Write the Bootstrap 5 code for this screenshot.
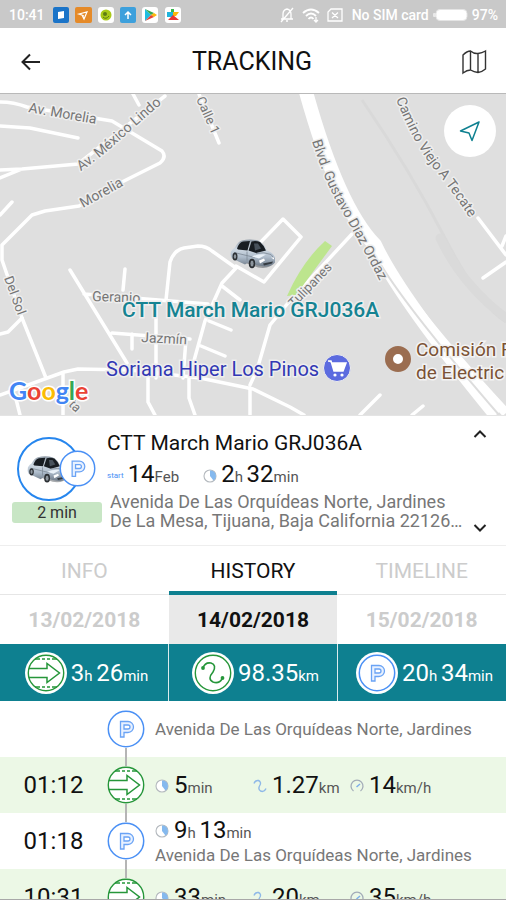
<!DOCTYPE html>
<html lang="en">
<head>
<meta charset="utf-8">
<meta name="viewport" content="width=device-width, initial-scale=1">
<title>Tracking</title>
<link href="https://cdn.jsdelivr.net/npm/bootstrap@5.3.0/dist/css/bootstrap.min.css" rel="stylesheet">
<style>
  :root { --teal: #0e8090; --blue: #4a90f5; --green: #26963a; --pale: #ecf8e6; }
  body { font-family: Roboto, "Liberation Sans", sans-serif; color: #111; background: #fff; }
  button { font-family: inherit; }
  svg { display: block; flex: none; }
  .screen { border-bottom: 1px solid #a8a8a8; }
  .status { background: #c9c9c9; color: #fff; height: 28px; font-size: 14px; font-weight: 500; padding: 2px 8px 0 9px; }
  .app-head { height: 66px; padding: 2px 17px 0; border-bottom: 1px solid #b9b9b9; }
  .app-head h1 { font-size: 25px; line-height: 32px; font-weight: 400; }
  .plain { background: none; border: 0; padding: 0; color: inherit; }
  .map-svg { width: 100%; height: auto; background: #dfdfdf; }
  .locate { top: 11px; right: 10px; width: 52px; height: 52px; background: #fff; border: 0; padding: 0; }
  .vehicle { padding: 12px 16px 11px 12px; border-top: 1px solid #e4e4e4; border-bottom: 1px solid #eee; gap: 5px; height: 131px; }
  .avatar { width: 90px; padding-top: 8px; }
  .ago { background: #c8e6c5; font-size: 16px; line-height: 21px; border-radius: 3px; color: #333; }
  .vehicle h2 { font-size: 21px; line-height: 30px; font-weight: 400; }
  .num { font-size: 24px; line-height: 28px; white-space: nowrap; }
  .num small { font-size: 15px; color: #555; }
  .addr { color: #777; font-size: 17px; line-height: 20px; }
  .vehicle .addr { font-size: 18px; line-height: 19px; padding: 1px 0 0 3px; }
  .since { padding-top: 2px; }
  .start { color: var(--blue); font-size: 8px; }
  .tabs button { height: 49px; font-size: 21px; color: #ccc; border-bottom: 1px solid #e6e6e6; padding-top: 3px; }
  .tabs button.active { color: #111; border-bottom: 4px solid var(--teal); padding-top: 6px; }
  .days button { height: 49px; font-size: 21px; font-weight: 700; color: #ccc; padding-top: 2px; }
  .days button.active { color: #111; background: #e9e9e9; }
  .totals { background: var(--teal); color: #fff; }
  .totals > div { height: 57px; gap: 4px; padding-left: 5px; border-right: 1px solid #dcebed; }
  .totals > div:last-child { border: 0; }
  .totals .num { padding-top: 3px; }
  .totals .num small { color: #fff; }
  .log li { height: 56px; }
  .log li:nth-child(even) { background: var(--pale); }
  .log time { width: 107px; font-size: 24px; line-height: 28px; text-align: center; }
  .rail { width: 38px; margin-right: 10px; }
  .rail i { flex: 1; width: 2px; background: #b5b5b5; }
  .rail i.none { background: none; }
  .metrics { display: grid; grid-template-columns: 98px 97px auto; padding-top: 2px; }
  .metric { gap: 5px; }
  .stop .num { line-height: 24px; }
</style>
<script src="https://cdn.jsdelivr.net/npm/bootstrap@5.3.0/dist/js/bootstrap.bundle.min.js"></script>
</head>
<body>
<svg width="0" height="0" class="position-absolute" aria-hidden="true">
  <defs>
    <linearGradient id="paint" x1="0" y1="0" x2="0" y2="1"><stop offset="0" stop-color="#8f9aa6"/><stop offset=".35" stop-color="#cfd9e3"/><stop offset=".65" stop-color="#aebccb"/><stop offset="1" stop-color="#6e7a87"/></linearGradient>
  </defs>
  <symbol id="car" viewBox="0 0 46 32">
    <path d="M3 20 L28 29 Q40 31 44 24 L42 18 L10 14Z" fill="#50565c" opacity=".5"/>
    <path d="M1 13 Q3 10 5 9 Q8 3 12 2 Q20 0 28 2 Q34 5 37 12 Q43 14 45 19 L45 24 Q42 28 35 28 L28 27 L18 24 L15 26 L2 20 Q0 17 1 13Z" fill="url(#paint)"/>
    <path d="M7 10 Q9 4 13 3 L20 2.500 L17.500 12 L8 11Z M18.500 12 L21.500 3 Q26 2 30 3.500 Q34 7 36 12 L26 14.500Z" fill="#181d22"/>
    <path d="M24 5 L28 5 L31 10 L25 12Z" fill="#48525c"/>
    <path d="M17 13 L17 22 M4 14 L25 19 M26 15 Q34 13 41 16 L44 20" stroke="#7c8894" stroke-width=".8" fill="none"/>
    <path d="M22 18 Q29 15 36 16 L29 20Z" fill="#e9f1f8"/>
    <path d="M29 22 L34 20 L35 22 L30 25Z M41 19 L44 19 L44 21Z" fill="#fff"/>
    <path d="M33 25 L43 23 L42 25 L34 27Z" fill="#353b41"/>
    <ellipse cx="5" cy="18" rx="2.500" ry="4" fill="#2b2f33"/><ellipse cx="5" cy="18" rx="1.200" ry="2.300" fill="#8d969e"/>
    <ellipse cx="22" cy="25" rx="3.200" ry="4.800" fill="#2b2f33"/><ellipse cx="22" cy="25" rx="1.600" ry="2.900" fill="#8d969e"/>
  </symbol>
  <symbol id="park" viewBox="0 0 38 38">
    <circle cx="19" cy="19" r="17.700" fill="#fff" stroke="#4a90f5" stroke-width="1.500"/>
    <path d="M13.500 11.500H21a5.500 5.500 0 0 1 0 11H17V27H13.500Z M17 15H21a2 2 0 0 1 0 4H17Z" fill="#e8f1ff" fill-rule="evenodd" stroke="#6aa3f5" stroke-width="1.300"/>
  </symbol>
  <symbol id="drive" viewBox="0 0 38 38">
    <circle cx="19" cy="19" r="17.700" fill="#fff" stroke="#26963a" stroke-width="1.400"/>
    <path d="M2 14.500H20V9.500L32.500 19L20 28.500V23.500H2" fill="none" stroke="#26963a" stroke-width="1.500"/>
    <path d="M8 5H13M15 5H18M20 5H23M25 5H30M8 33H13M15 33H18M20 33H23M25 33H30" stroke="#26963a" stroke-width="1.600"/>
  </symbol>
  <symbol id="route" viewBox="0 0 38 38">
    <circle cx="19" cy="19" r="17.700" fill="#fff" stroke="#26963a" stroke-width="1.400"/>
    <path d="M9 14Q11 8 17 9Q23 11 19 18Q13 25 19 28Q25 30 28 25" fill="none" stroke="#26963a" stroke-width="1.600"/>
    <circle cx="9" cy="14" r="1.900" fill="#26963a"/><circle cx="28.500" cy="24" r="1.900" fill="#26963a"/>
  </symbol>
  <symbol id="clock" viewBox="0 0 14 14">
    <circle cx="7" cy="7" r="6" fill="#fff" stroke="#b4b9be" stroke-width="1.100"/><path d="M7 1.500A5.500 5.500 0 0 1 10.500 11.500L7 7Z" fill="#85b9ee"/>
  </symbol>
  <symbol id="path" viewBox="0 0 14 14">
    <path d="M1 4.500Q2 1 5.500 1.500Q8.500 3 7 6Q4.500 10 7.500 12Q11 13.500 13 9.500" fill="none" stroke="#8fb9e8" stroke-width="1.400"/>
  </symbol>
  <symbol id="gauge" viewBox="0 0 14 14">
    <path d="M3.500 12A6 6 0 1 1 10.500 12" fill="none" stroke="#a3acb8" stroke-width="1.300"/><path d="M6.500 8L10 5" stroke="#7daeea" stroke-width="1.500"/>
  </symbol>
</svg>

<div class="screen vh-100 d-flex flex-column overflow-hidden">
  <div class="status d-flex align-items-center justify-content-between flex-shrink-0">
    <div class="d-flex align-items-center">
      <span class="me-2">10:41</span>
      <svg width="130" height="16" viewBox="0 0 130 16" aria-hidden="true">
        <rect width="16" height="16" rx="2" fill="#1b74c8"/><path d="M5 5L11 4V11L5 12Z" fill="#fff"/>
        <rect x="22" width="17" height="16" rx="2" fill="#e58a28"/><path d="M26 7L34 5L31 12L29 8Z M26 7L31 9" fill="none" stroke="#fff" stroke-width="1.200"/>
        <rect x="45" width="16" height="16" rx="3" fill="#fff"/><circle cx="53" cy="8" r="5.500" fill="#a9c916"/><circle cx="52" cy="7" r="2" fill="#5f7c12"/><path d="M50 10Q53 13 56 9" stroke="#5f7c12" fill="none"/>
        <rect x="67" width="16" height="16" rx="2" fill="#3da0dc"/><path d="M75 12V5M72 8L75 5L78 8" stroke="#fff" stroke-width="1.500" fill="none"/>
        <rect x="89" width="16" height="16" rx="3" fill="#fff"/><path d="M92 2L98 8L92 14Z" fill="#20bde0"/><path d="M92 2L101 6L98 8Z" fill="#35a853"/><path d="M98 8L101 6L104 8L101 10Z" fill="#fbb60a"/><path d="M92 14L98 8L101 10Z" fill="#e94335"/>
        <rect x="112" width="16" height="16" rx="3" fill="#fff"/><path d="M118 2H121V6H118Z" fill="#35b84b"/><path d="M114 5H120V10H114Z" fill="#20b4dd"/><path d="M120 5H126L123 9H120Z" fill="#fbb60a"/><path d="M115 13L120 8L126 13Z" fill="#e83535"/>
      </svg>
    </div>
    <div class="d-flex align-items-center gap-1">
      <svg class="me-1" width="65" height="16" viewBox="0 0 65 16" fill="none" stroke="#fff" stroke-width="1.300" aria-hidden="true">
        <path d="M2 12H14M4 12V7Q4 3 8 2Q12 3 12 7V12M7 14H9M2 15L14 1"/>
        <path d="M24 6Q32 -1 40 6M27 9Q32 4 37 9M29.500 12Q32 9 34.500 12" stroke-width="1.900"/><path d="M37 10V15M35 13L37 15L39 13"/>
        <path d="M52 2H63V14H49V5Z M53 5.500L59 11M59 5.500L53 11"/>
      </svg>
      <span>No SIM card</span>
      <svg width="35" height="12" viewBox="0 0 35 12" aria-hidden="true"><rect x="3" y=".5" width="31" height="11" rx="4" fill="#fff" stroke="#e4e4e4"/><rect y="4" width="3" height="4" rx="1" fill="#e9e9e9"/></svg>
      <span>97%</span>
    </div>
  </div>

  <header class="app-head d-flex align-items-center justify-content-between flex-shrink-0">
    <button class="plain" aria-label="Back"><svg width="28" height="24" viewBox="0 0 28 24" fill="none" stroke="#222" stroke-width="2"><path d="M23 12H6M13 4.500L5.500 12L13 19.500"/></svg></button>
    <h1 class="m-0">TRACKING</h1>
    <button class="plain" aria-label="Map"><svg width="30" height="26" viewBox="0 0 30 26" fill="none" stroke="#333" stroke-width="1.400"><path d="M4 6Q8 2 11.500 2Q15 5 19 4.500Q23 4 26.500 2V20Q23 23 19 23.500Q15 23 11.500 21Q8 21 4 24ZM11.500 2V21M19 4.500V23.500"/></svg></button>
  </header>

  <section class="position-relative flex-shrink-0" aria-label="Map">
    <svg class="map-svg" viewBox="0 94 506 321" font-family="Roboto, sans-serif">
      <defs>
        <path id="lbl-blvd" d="M312 141Q326 186 343 213Q365 252 396 312"/>
        <path id="lbl-cam" d="M396 99Q414 145 435 170Q457 197 484 240"/>
        <path id="lbl-mex" d="M81 171Q99 159 120 140T180 88"/>
      </defs>
      <path d="M362 100Q410 170 445 238T506 322" fill="none" stroke="#d9d9d9" stroke-width="3"/>
      <path d="M440 238Q462 285 506 318" fill="none" stroke="#dadada" stroke-width="9" stroke-linecap="round"/>
      <g fill="none" stroke="#fff" stroke-width="3.500" stroke-linejoin="round" stroke-linecap="round">
        <path d="M0 102Q14 102 27 107L112 121L162 151Q167 157 160 163L122 182L79 206L45 211L32 215L2 245V260L22 318L46 378"/>
        <path d="M0 126L30 128L78 138M0 170L22 169L78 164L165 96M0 178L22 169M0 215L12 202M133 94L139 105M199 94L219 143"/>
        <path d="M70 270L127 363M84 294L208 304M125 269L123 290M112 333L190 339M132 334V349M0 395L64 372L78 369L130 370L200 378L253 389L290 407L304 415M15 395L20 415M63 373V415M148 372V402L155 415M189 376V398L195 415"/>
        <path d="M0 334L8 332L22 318M156 300V378M183 378L186 339M166 300L170 262Q174 250 184 248L198 246Q206 246 212 251L236 268L222 283L205 321L190 375M222 286L240 300M209 321L231 330M201 346L225 356M253 250L283 219L301 237L264 282L236 266M352 234L288 303L270 325L257 370L250 385M483 278L506 262M360 415L380 395M412 415L423 406M478 218L506 255M502 246L506 236M250 388V415M490 413L497 408"/>
      </g>
      <path d="M306 92Q338 207 375 245Q400 298 496 415" fill="none" stroke="#fff" stroke-width="14"/>
      <path d="M379 252Q402 300 506 413" fill="none" stroke="#fff" stroke-width="9"/>
      <path d="M381 265Q410 312 499 415" fill="none" stroke="#ddd" stroke-width="2"/>
      <path d="M287 296Q302 262 325 241L332 246L296 295Z" fill="#bde58e"/>
      <g fill="#757575" font-size="14" stroke="#eee" stroke-width="3" paint-order="stroke" stroke-linejoin="round">
        <text transform="translate(28 112) rotate(10)">Av. Morelia</text>
        <text><textPath href="#lbl-mex">Av. México Lindo</textPath></text>
        <text transform="translate(83 208) rotate(-29)">Morelia</text>
        <text transform="translate(196 99) rotate(66)" font-size="13">Calle 1</text>
        <text><textPath href="#lbl-blvd">Blvd. Gustavo Diaz Ordaz</textPath></text>
        <text><textPath href="#lbl-cam">Camino Viejo A Tecate</textPath></text>
        <text transform="translate(4 278) rotate(70)" font-size="13">Del Sol</text>
        <text transform="translate(92 301) rotate(2)">Geranio</text>
        <text transform="translate(141 342) rotate(3)">Jazmín</text>
        <text transform="translate(294 308) rotate(-46)" font-size="13">Tulipanes</text>
        <text transform="translate(68 405) rotate(45)" font-size="13">ta</text>
      </g>
      <use href="#car" x="230" y="238" width="46" height="33"/>
      <text x="122" y="317" font-size="21" font-weight="500" fill="#158392" stroke="#eee" stroke-width="3" paint-order="stroke">CTT March Mario GRJ036A</text>
      <text x="106" y="376" font-size="20" fill="#3238b4" stroke="#eee" stroke-width="3" paint-order="stroke">Soriana Hiper Los Pinos</text>
      <circle cx="337" cy="368" r="13.500" fill="#5c6bdf" stroke="#eee"/>
      <path d="M328 361H331L334 371H343L346 363H332" fill="#fff" stroke="#fff" stroke-width="1.500"/><circle cx="335" cy="375" r="1.600" fill="#fff"/><circle cx="342" cy="375" r="1.600" fill="#fff"/>
      <circle cx="398" cy="359" r="9" fill="#fff" stroke="#9b6d50" stroke-width="8"/>
      <g font-size="19" fill="#7b5235" stroke="#f3f3f3" stroke-width="3" paint-order="stroke"><text x="416" y="356">Comisión F</text><text x="416" y="379">de Electric</text></g>
      <text x="9" y="400" font-family="Lato, sans-serif" font-size="25" font-weight="700" stroke="#fff" stroke-width="3" paint-order="stroke"><tspan fill="#4285f4">G</tspan><tspan fill="#ea4335">o</tspan><tspan fill="#fbbc05">o</tspan><tspan fill="#4285f4">g</tspan><tspan fill="#34a853">l</tspan><tspan fill="#ea4335">e</tspan></text>
    </svg>
    <button class="locate position-absolute rounded-circle d-flex align-items-center justify-content-center" aria-label="Locate"><svg width="24" height="24" viewBox="0 0 24 24" fill="none" stroke="#0e8090" stroke-width="1.500" stroke-linejoin="round"><path d="M21 3L2.500 12L11 14L14 21.500Z"/></svg></button>
  </section>

  <section class="vehicle d-flex flex-shrink-0">
    <div class="avatar d-flex flex-column flex-shrink-0">
      <svg width="90" height="66" viewBox="0 0 90 66" aria-hidden="true">
        <circle cx="37" cy="33" r="31" fill="#fff" stroke="#2686ee" stroke-width="2"/>
        <use href="#car" x="15" y="19" width="42" height="30"/>
        <use href="#park" x="47" y="14" width="37" height="37"/>
      </svg>
      <div class="ago text-center">2 min</div>
    </div>
    <div class="flex-grow-1 overflow-hidden">
      <h2 class="m-0">CTT March Mario GRJ036A</h2>
      <div class="since d-flex align-items-center">
        <span class="start me-1">start</span><span class="num me-4">14<small>Feb</small></span>
        <svg width="14" height="14" class="me-1"><use href="#clock"/></svg><span class="num">2<small>h </small>32<small>min</small></span>
      </div>
      <div class="addr text-nowrap">Avenida De Las Orquídeas Norte, Jardines<br>De La Mesa, Tijuana, Baja California 22126…</div>
    </div>
    <div class="d-flex flex-column justify-content-between flex-shrink-0">
      <button class="plain" aria-label="Previous vehicle"><svg width="20" height="12" viewBox="0 0 20 12" fill="none" stroke="#222" stroke-width="2"><path d="M4.500 9L10 3.500L15.500 9"/></svg></button>
      <button class="plain" aria-label="Next vehicle"><svg width="20" height="12" viewBox="0 0 20 12" fill="none" stroke="#222" stroke-width="2"><path d="M4.500 3L10 8.500L15.500 3"/></svg></button>
    </div>
  </section>

  <nav class="flex-shrink-0">
    <div class="tabs row g-0">
      <button class="plain col">INFO</button><button class="plain col active">HISTORY</button><button class="plain col">TIMELINE</button>
    </div>
    <div class="days row g-0">
      <button class="plain col">13/02/2018</button><button class="plain col active">14/02/2018</button><button class="plain col">15/02/2018</button>
    </div>
  </nav>

  <div class="totals row g-0 flex-shrink-0">
    <div class="col d-flex align-items-center justify-content-center"><svg width="42" height="42" viewBox="0 0 42 42"><circle cx="21" cy="21" r="21" fill="#fff"/><use href="#drive" x="2" y="2" width="38" height="38"/></svg><span class="num">3<small>h </small>26<small>min</small></span></div>
    <div class="col d-flex align-items-center justify-content-center"><svg width="42" height="42" viewBox="0 0 42 42"><circle cx="21" cy="21" r="21" fill="#fff"/><use href="#route" x="2" y="2" width="38" height="38"/></svg><span class="num">98.35<small>km</small></span></div>
    <div class="col d-flex align-items-center justify-content-center"><svg width="42" height="42" viewBox="0 0 42 42"><circle cx="21" cy="21" r="21" fill="#fff"/><use href="#park" x="2" y="2" width="38" height="38"/></svg><span class="num">20<small>h </small>34<small>min</small></span></div>
  </div>

  <ul class="log list-unstyled m-0 flex-grow-1 overflow-hidden">
    <li class="d-flex align-items-center">
      <time></time>
      <div class="rail h-100 d-flex flex-column align-items-center"><i class="none"></i><svg width="38" height="38"><use href="#park"/></svg><i></i></div>
      <div class="addr">Avenida De Las Orquídeas Norte, Jardines</div>
    </li>
    <li class="d-flex align-items-center">
      <time>01:12</time>
      <div class="rail h-100 d-flex flex-column align-items-center"><i></i><svg width="38" height="38"><use href="#drive"/></svg><i></i></div>
      <div class="metrics">
        <span class="metric d-flex align-items-center"><svg width="14" height="14"><use href="#clock"/></svg><span class="num">5<small>min</small></span></span>
        <span class="metric d-flex align-items-center"><svg width="14" height="14"><use href="#path"/></svg><span class="num">1.27<small>km</small></span></span>
        <span class="metric d-flex align-items-center"><svg width="14" height="14"><use href="#gauge"/></svg><span class="num">14<small>km/h</small></span></span>
      </div>
    </li>
    <li class="d-flex align-items-center">
      <time>01:18</time>
      <div class="rail h-100 d-flex flex-column align-items-center"><i></i><svg width="38" height="38"><use href="#park"/></svg><i></i></div>
      <div class="stop">
        <span class="metric d-flex align-items-center"><svg width="14" height="14"><use href="#clock"/></svg><span class="num">9<small>h </small>13<small>min</small></span></span>
        <div class="addr">Avenida De Las Orquídeas Norte, Jardines</div>
      </div>
    </li>
    <li class="d-flex align-items-center">
      <time>10:31</time>
      <div class="rail h-100 d-flex flex-column align-items-center"><i></i><svg width="38" height="38"><use href="#drive"/></svg><i></i></div>
      <div class="metrics">
        <span class="metric d-flex align-items-center"><svg width="14" height="14"><use href="#clock"/></svg><span class="num">33<small>min</small></span></span>
        <span class="metric d-flex align-items-center"><svg width="14" height="14"><use href="#path"/></svg><span class="num">20<small>km</small></span></span>
        <span class="metric d-flex align-items-center"><svg width="14" height="14"><use href="#gauge"/></svg><span class="num">35<small>km/h</small></span></span>
      </div>
    </li>
  </ul>
</div>
</body>
</html>
